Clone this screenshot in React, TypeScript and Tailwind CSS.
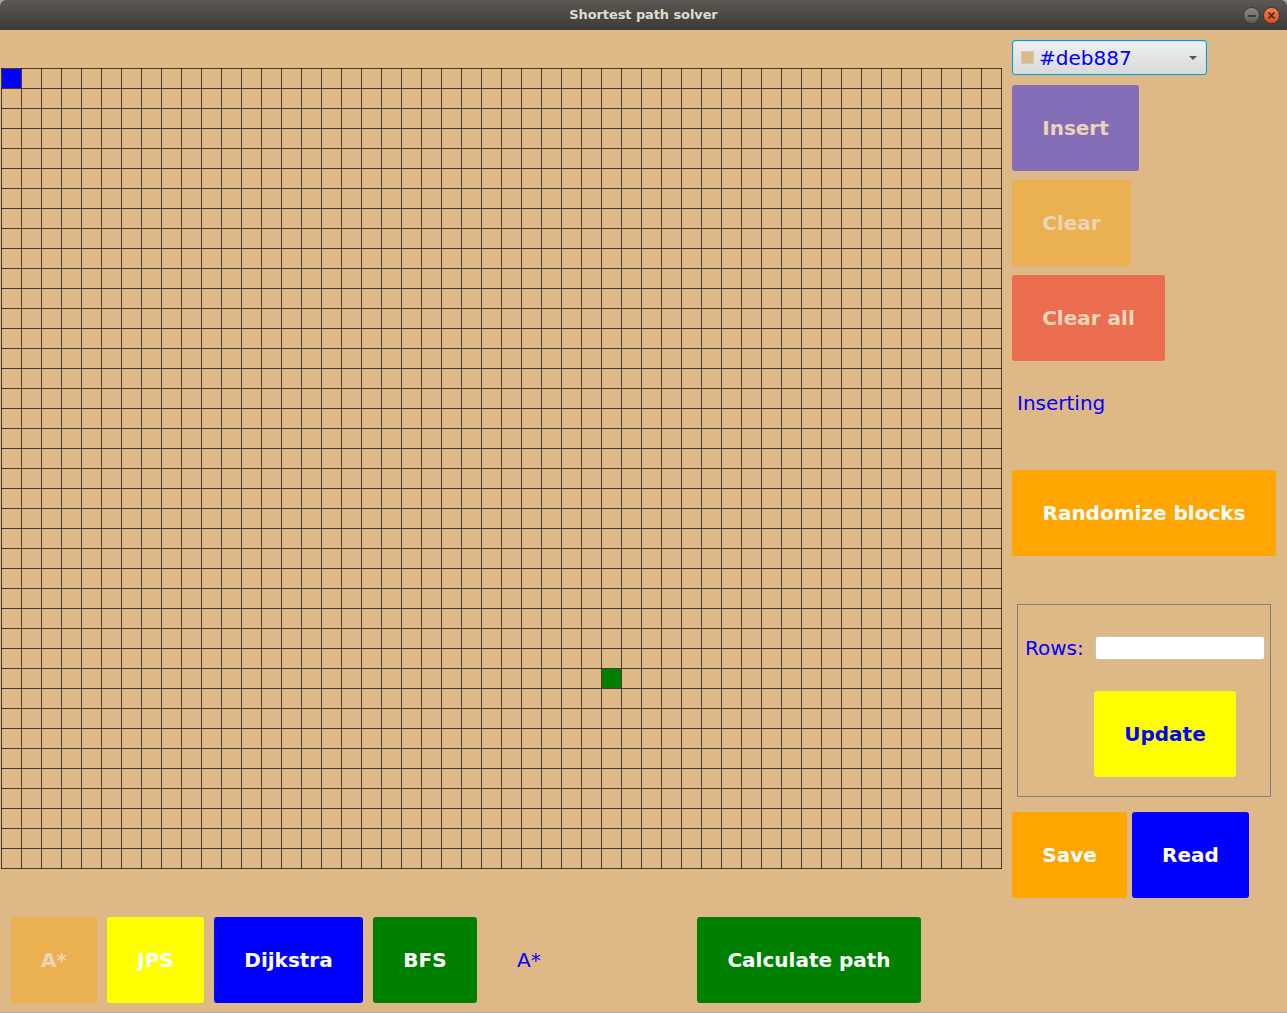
import React from 'react';

const COLS = 50;
const ROWS = 40;
const CELL = 20;

function Grid() {
  const w = COLS * CELL + 1;
  const h = ROWS * CELL + 1;
  const lines: React.ReactNode[] = [];
  for (let i = 0; i <= COLS; i++) {
    lines.push(<line key={'v' + i} x1={i * CELL + 0.5} y1={0} x2={i * CELL + 0.5} y2={h} />);
  }
  for (let j = 0; j <= ROWS; j++) {
    lines.push(<line key={'h' + j} x1={0} y1={j * CELL + 0.5} x2={w} y2={j * CELL + 0.5} />);
  }
  return (
    <svg width={w} height={h} className="block">
      <rect x={1} y={1} width={19} height={19} fill="#0000ff" />
      <rect x={601} y={601} width={19} height={19} fill="#008000" />
      <g stroke="#000" strokeOpacity={0.68} strokeWidth={1}>
        {lines}
      </g>
    </svg>
  );
}

function Btn({
  label,
  className,
}: {
  label: string;
  className: string;
}) {
  return (
    <div
      className={`h-[86px] flex items-center justify-center rounded-[3px] font-bold text-[20px] ${className}`}
    >
      {label}
    </div>
  );
}

function TitleBar() {
  return (
    <div className="h-[30px] rounded-t-[6px] bg-gradient-to-b from-[#5c5954] to-[#3b3a36] flex items-center px-[7px]">
      <div className="flex-1" />
      <div className="font-['DejaVu_Sans'] font-bold text-[13px] text-[#dfdbd2] tracking-[-0.1px]">
        Shortest path solver
      </div>
      <div className="flex-1 flex justify-end gap-[3px] pt-[1px]">
        <div className="w-[17px] h-[17px] rounded-full bg-gradient-to-b from-[#8c8a85] to-[#5f5d59] border border-[#3a3935] flex items-center justify-center">
          <div className="w-[8px] h-[2px] bg-[#3c3b37]" />
        </div>
        <div className="w-[17px] h-[17px] rounded-full bg-gradient-to-b from-[#f77e52] to-[#df4a16] border border-[#3a3935] flex items-center justify-center">
          <svg width="9" height="9" viewBox="0 0 9 9">
            <path d="M1.5 1.5 L7.5 7.5 M7.5 1.5 L1.5 7.5" stroke="#3c2a20" strokeWidth="1.6" />
          </svg>
        </div>
      </div>
    </div>
  );
}

function ColorPicker() {
  return (
    <div className="w-[195px] h-[35px] rounded-[3px] border border-[#039ed3] bg-gradient-to-b from-[#f0f0f0] to-[#d9d9d9] flex items-center pl-[8px] pr-[9px] shadow-[inset_0_0_0_1px_#bfe6f3]">
      <div className="w-[13px] h-[13px] bg-[#deb887] border border-[#c9c9c9]" />
      <span className="ml-[5px] text-[20px] text-[#0000ff] leading-none flex-1">#deb887</span>
      <svg width="8" height="4" viewBox="0 0 8 4">
        <path d="M0 0 L8 0 L4 4 Z" fill="#555" />
      </svg>
    </div>
  );
}

export default function App() {
  return (
    <div className="w-[1287px] h-[1013px] bg-[#a9a9a9] font-['DejaVu_Sans',sans-serif] overflow-hidden">
      <TitleBar />
      <div className="h-[982px] bg-[#deb887] flex">
        {/* left: grid and algorithm buttons */}
        <div className="w-[1012px] pl-[1px] pt-[38px] flex flex-col">
          <Grid />
          <div className="mt-[48px] pl-[10px] flex items-center gap-[10px]">
            <Btn label="A*" className="w-[86px] bg-[#ffa500] text-white opacity-40" />
            <Btn label="JPS" className="w-[97px] bg-[#ffff00] text-white" />
            <Btn label="Dijkstra" className="w-[149px] bg-[#0000ff] text-white" />
            <Btn label="BFS" className="w-[104px] bg-[#008000] text-white" />
            <div className="w-[200px] pl-[30px] text-[20px] text-[#0000ff]">A*</div>
            <Btn label="Calculate path" className="w-[224px] bg-[#008000] text-white" />
          </div>
        </div>

        {/* right: controls */}
        <div className="flex-1 pt-[10px] flex flex-col items-start">
          <ColorPicker />
          <Btn label="Insert" className="mt-[10px] w-[127px] bg-[#0000ff] text-white opacity-40" />
          <Btn label="Clear" className="mt-[9px] w-[119px] bg-[#ffa500] text-white opacity-40" />
          <Btn label="Clear all" className="mt-[9px] w-[153px] bg-[#ff0000] text-white opacity-40" />
          <div className="mt-[30px] ml-[5px] h-[24px] leading-[24px] text-[20px] text-[#0000ff]">
            Inserting
          </div>
          <Btn label="Randomize blocks" className="mt-[55px] w-[264px] bg-[#ffa500] text-white" />
          <div className="mt-[48px] ml-[5px] w-[254px] h-[193px] border border-[#808080] pt-[31px]">
            <div className="flex items-center h-[24px]">
              <div className="w-[77px] pl-[7px] text-[20px] text-[#0000ff]">Rows:</div>
              <div className="w-[170px] h-[24px] bg-white rounded-[3px] border border-[#c4c4c4]" />
            </div>
            <div className="mt-[31px] pl-[76px]">
              <Btn label="Update" className="w-[142px] bg-[#ffff00] text-[#0000ff]" />
            </div>
          </div>
          <div className="mt-[15px] flex gap-[5px]">
            <Btn label="Save" className="w-[115px] bg-[#ffa500] text-white" />
            <Btn label="Read" className="w-[117px] bg-[#0000ff] text-white" />
          </div>
        </div>
      </div>
    </div>
  );
}
